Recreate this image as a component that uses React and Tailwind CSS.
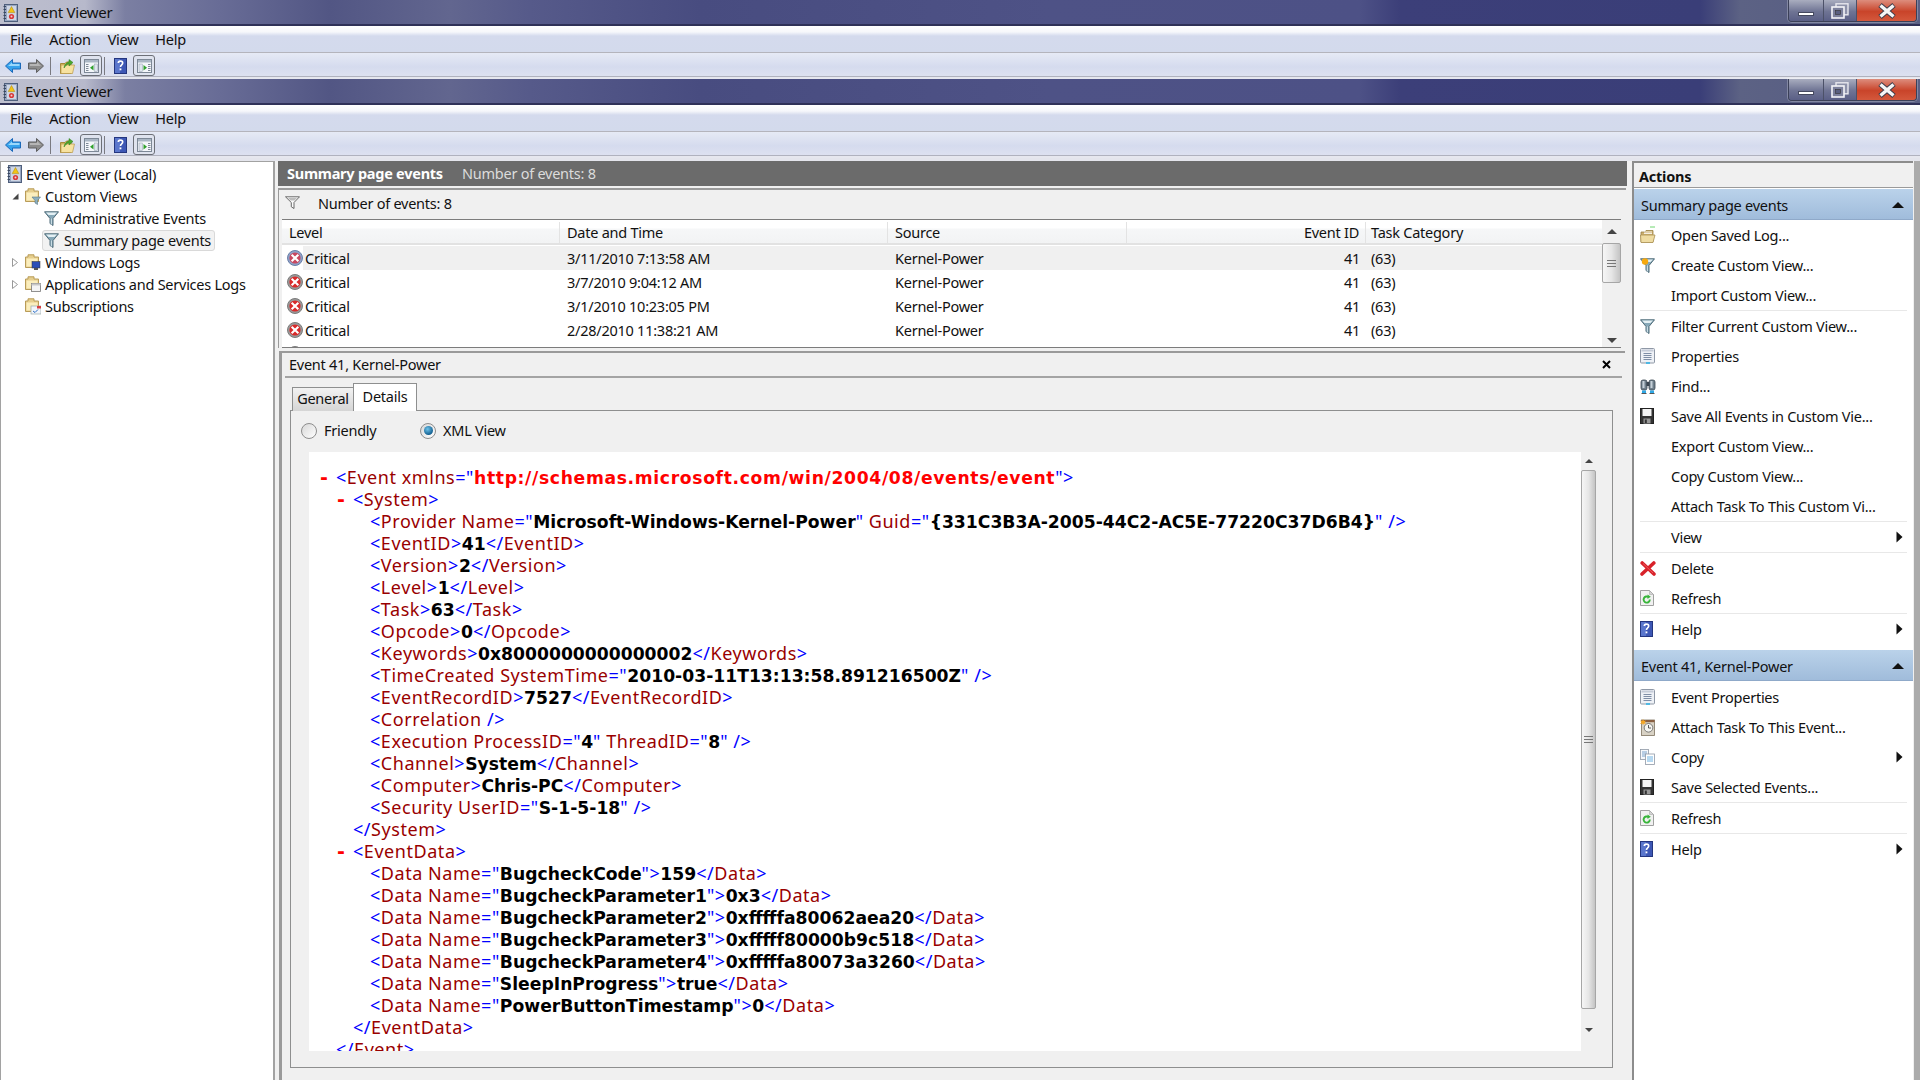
import React from "react";

const UI = "font-['Noto_Sans',sans-serif] text-[14.5px] tracking-[-0.25px] leading-none text-[#111]";

function Svg({ w = 16, h = 16, vb, className = "", children }) {
  return (
    <svg width={w} height={h} viewBox={vb || `0 0 ${w} ${h}`} className={"shrink-0 " + className}>
      {children}
    </svg>
  );
}

const EvIcon = () => (
  <Svg w={15} h={18}>
    <rect x="1.5" y="0.5" width="13" height="17" fill="#98a6c0" stroke="#4f5f7c" />
    <path d="M0.5 2.5 H3 M0.5 5.5 H3 M0.5 8.5 H3 M0.5 11.5 H3 M0.5 14.5 H3" stroke="#39475f" strokeWidth="1" />
    <rect x="4" y="2" width="9" height="14" fill="#cfd6e4" />
    <path d="M8.5 2.5 L11.8 8.6 H5.2 Z" fill="#f2c416" stroke="#a98408" strokeWidth="0.5" />
    <circle cx="8.5" cy="12.5" r="2.6" fill="#d8383a" />
    <circle cx="8.5" cy="12.5" r="1" fill="#f3d0d0" />
  </Svg>
);
const BackArrow = () => (
  <Svg w={16} h={14}>
    <path d="M0.5 7 L7.5 0.5 V4 H15.5 V10 H7.5 V13.5 Z" fill="#35a2ec" stroke="#1b68b8" strokeWidth="1" />
    <path d="M3 7 L7 3.5 V5 H14.5 V7 Z" fill="#9ad8fb" />
  </Svg>
);
const FwdArrow = () => (
  <Svg w={16} h={14}>
    <path d="M15.5 7 L8.5 0.5 V4 H0.5 V10 H8.5 V13.5 Z" fill="#8c8c8c" stroke="#5f5f5f" strokeWidth="1" />
    <path d="M2 5 H9 V3 L13 7 H2 Z" fill="#b5b5b5" />
  </Svg>
);
const FolderUp = () => (
  <Svg w={15} h={16}>
    <path d="M0.5 5.5 H5 L6.5 4 H11 V15.5 H0.5 Z" fill="#d9bc67" stroke="#a78a3a" />
    <path d="M1 7 H14.5 L12.5 15.5 H1 Z" fill="#f7e2a0" stroke="#b8984a" strokeWidth="0.7" />
    <path d="M4 10 C4.5 6 7 4.5 9 4 V1.5 L13 4.5 L9 8 V5.8 C7 6.2 5.5 8 4 10 Z" fill="#4aa82e" stroke="#2f7a1c" strokeWidth="0.5" />
  </Svg>
);
const PaneIcon = ({ right }) => (
  <Svg w={15} h={14}>
    <rect x="0.5" y="0.5" width="14" height="13" fill="#f4f6fa" stroke="#7d8896" />
    <rect x="1" y="1" width="13" height="2.5" fill="#aab6c4" />
    {right ? (
      <>
        <rect x="2" y="5" width="3.5" height="7.5" fill="#dfe5ee" stroke="#93a0b0" strokeWidth="0.5" />
        <path d="M6.5 6 L10 8.7 L6.5 11.5 Z" fill="#2fa02c" />
        <path d="M11 5.5 H13.5 M11 7.5 H13.5 M11 9.5 H13.5 M11 11.5 H13.5" stroke="#7d8896" strokeWidth="1" />
      </>
    ) : (
      <>
        <path d="M2 5.5 H4.5 M2 7.5 H4.5 M2 9.5 H4.5 M2 11.5 H4.5" stroke="#7d8896" strokeWidth="1" />
        <path d="M9.5 6 L6 8.7 L9.5 11.5 Z" fill="#2fa02c" />
        <rect x="10.5" y="5" width="3" height="7.5" fill="#dfe5ee" stroke="#93a0b0" strokeWidth="0.5" />
      </>
    )}
  </Svg>
);
const HelpIcon = () => (
  <Svg w={13} h={16}>
    <rect x="0.5" y="0.5" width="12" height="15" fill="#3d57b5" stroke="#24367f" />
    <rect x="1" y="1" width="5" height="14" fill="#5a76cc" />
    <path d="M4.3 5 C4.3 2.5 8.7 2.5 8.7 5 C8.7 6.8 6.5 7 6.5 9" fill="none" stroke="#fff" strokeWidth="1.6" />
    <rect x="5.6" y="10.4" width="1.8" height="1.9" fill="#fff" />
  </Svg>
);
const TreeFolder = ({ children }) => (
  <Svg w={16} h={17} className="mr-[4px]">
    <path d="M0.5 3 H3 V0.8 H9 V3 H13.5 V13.5 H0.5 Z" fill="#e6cf8e" stroke="#b99c58" />
    <rect x="1.5" y="4.5" width="11" height="8" fill="#fbeebd" />
    {children}
  </Svg>
);
const Funnel = ({ w = 15, h = 15, orange }) => (
  <Svg w={w} h={h} vb="0 0 15 15">
    <path d="M0.5 0.8 H14.5 L9 7.5 V14.5 L6 12.5 V7.5 Z" fill="#86a8b8" stroke="#4f6b78" strokeWidth="1" />
    <path d="M2 1.5 H13 L10.5 4 H4.5 Z" fill="#e4f0f4" />
    <rect x="6.8" y="7.5" width="1.2" height="6" fill="#c9dce4" />
    {orange && <circle cx="5" cy="3.5" r="3.2" fill="#f7a90e" />}
  </Svg>
);
const OutlineFunnel = () => (
  <Svg w={15} h={13} vb="0 0 15 13">
    <path d="M0.5 0.8 H14.5 L9 6.5 V12.5 L6.3 10.8 V6.5 Z" fill="#fafafa" stroke="#5a5a5a" strokeWidth="0.9" />
    <path d="M3 2 H12 L9.5 4.5 H5.5 Z" fill="#bdbdbd" />
  </Svg>
);
const Critical = ({ tint }) => (
  <Svg w={16} h={16}>
    <circle cx="8" cy="8" r="7.5" fill={tint ? "#8ea2c8" : "#9a9a9a"} stroke={tint ? "#6a7fa8" : "#7c7c7c"} strokeWidth="1" />
    <circle cx="8" cy="8" r="5.6" fill={tint ? "#c9475f" : "#d92a2a"} />
    <path d="M5.4 5.4 L10.6 10.6 M10.6 5.4 L5.4 10.6" stroke="#fff" strokeWidth="2.1" strokeLinecap="square" />
  </Svg>
);
const OpenLog = () => (
  <Svg w={16} h={18}>
    <path d="M10 1 H15" stroke="#6fd66f" strokeWidth="1" />
    <path d="M1 6 H5 L6 4.5 H13 V16 H1 Z" fill="#cdb070" stroke="#9a8144" strokeWidth="0.8" />
    <path d="M0.5 9 H15 L13 16.5 H1 Z" fill="#efdca2" stroke="#a98f50" strokeWidth="0.8" />
    <path d="M4 6 H12 M4 7.5 H12" stroke="#fff" strokeWidth="0.8" />
  </Svg>
);
const Props = () => (
  <Svg w={15} h={16}>
    <rect x="0.5" y="0.5" width="14" height="14.5" rx="1" fill="#eef1f6" stroke="#8f98a6" />
    <rect x="1.5" y="1.5" width="12" height="2" fill="#c5ccd8" />
    <path d="M3.5 5.5 H11.5 M3.5 7.5 H11.5 M3.5 9.5 H11.5 M3.5 11.5 H11.5" stroke="#7f8ea6" strokeWidth="1" />
    <rect x="6" y="14.2" width="4" height="1.6" fill="#34b4e8" />
  </Svg>
);
const Binoc = () => (
  <Svg w={16} h={16}>
    <rect x="1" y="2" width="6" height="10" rx="2" fill="#70808c" stroke="#3b4650" strokeWidth="0.8" />
    <rect x="9" y="2" width="6" height="10" rx="2" fill="#70808c" stroke="#3b4650" strokeWidth="0.8" />
    <rect x="2.5" y="3" width="2" height="7" fill="#c5d0d8" />
    <rect x="10.5" y="3" width="2" height="7" fill="#c5d0d8" />
    <rect x="6.5" y="4" width="3" height="4" fill="#3b4650" />
    <path d="M2 12.5 H6 V15 H2 Z M10 12.5 H14 V15 H10 Z" fill="#2ea8e6" />
    <path d="M1.5 15.5 H6.5 M9.5 15.5 H14.5" stroke="#555" />
  </Svg>
);
const Floppy = () => (
  <Svg w={14} h={16}>
    <rect x="0.5" y="0.5" width="13" height="15" fill="#333" stroke="#222" />
    <rect x="2.5" y="1" width="9" height="7" fill="#f4f4f4" />
    <rect x="3.5" y="10.5" width="7" height="5" fill="#9a9a9a" />
    <rect x="4.8" y="11.5" width="2" height="3.5" fill="#333" />
  </Svg>
);
const RedX = () => (
  <Svg w={16} h={15}>
    <path d="M2.2 2 L14 13 M13.8 2 L2 13" stroke="#d8222a" strokeWidth="3.6" strokeLinecap="round" />
    <path d="M3 2.5 L13 12" stroke="#f2696c" strokeWidth="0.8" />
  </Svg>
);
const Refresh = () => (
  <Svg w={14} h={16}>
    <path d="M0.5 0.5 H9.5 L13.5 4.5 V15.5 H0.5 Z" fill="#f1f1f1" stroke="#a0a0a0" />
    <path d="M9.5 0.5 V4.5 H13.5 Z" fill="#d5d5d5" stroke="#a0a0a0" strokeWidth="0.5" />
    <path d="M9.8 9.5 A3.1 3.1 0 1 1 8.6 7.1" fill="none" stroke="#38b53a" strokeWidth="1.9" />
    <path d="M7.5 4.6 L10.8 6.8 L7.5 9 Z" fill="#38b53a" />
  </Svg>
);
const TaskIcon = () => (
  <Svg w={15} h={17}>
    <rect x="1.5" y="1" width="13" height="15.5" fill="#d8d2c5" stroke="#7f735f" strokeWidth="0.8" />
    <rect x="1.5" y="1" width="13" height="2.2" fill="#8a5f42" />
    <circle cx="8.5" cy="8.8" r="4.3" fill="#f6f6f2" stroke="#5e5e5e" strokeWidth="0.8" />
    <path d="M8.5 6 V9 H11" fill="none" stroke="#333" strokeWidth="0.8" />
    <path d="M3 0 L4 2 L6 1.5 L4.8 3.2 L6 5 L4 4.4 L3 6 L2.2 4.4 L0 5 L1.3 3.2 L0 1.5 L2.2 2 Z" fill="#f5a623" />
  </Svg>
);
const CopyIcon = () => (
  <Svg w={15} h={16}>
    <rect x="0.5" y="0.5" width="8" height="10" fill="#f5f7fb" stroke="#8f98a6" strokeWidth="0.8" />
    <path d="M2 3 H7 M2 5 H7 M2 7 H7" stroke="#5a8fc4" strokeWidth="0.8" />
    <rect x="5.5" y="5" width="9" height="10.5" fill="#fff" stroke="#8f98a6" strokeWidth="0.8" />
    <path d="M7 8 H13 M7 10 H13 M7 12 H13" stroke="#4aa0dc" strokeWidth="0.8" />
  </Svg>
);

const Triangle = ({ className }) => (
  <Svg w={7} h={12} className={className}>
    <path d="M0.5 0.5 L6.5 6 L0.5 11.5 Z" fill="#111" />
  </Svg>
);
const UpTri = ({ className }) => (
  <Svg w={12} h={6} className={className}>
    <path d="M0 6 L6 0 L12 6 Z" fill="#111" />
  </Svg>
);

function WindowChrome() {
  return (
    <div className="flex flex-col shrink-0">
      <div className="h-[24px] flex justify-between bg-[linear-gradient(90deg,#bdbfce_0px,#b7b9cb_85px,#7b7fa2_125px,#686c96_220px,#525684_330px,#62668f_450px,#565a8a_530px,#484c80_700px,#4e5286_1050px,#4d5186_1360px,#3c3f79_1400px,#3a3e78_1700px,#5c6284_1740px,#5a6084_1790px)]">
        <div className="flex items-center pl-[3px] gap-[7px] pt-[1px]">
          <EvIcon />
          <span className={UI + " !text-[15px] text-[#111]"}>Event Viewer</span>
        </div>
        <div className="flex h-[22px] mr-[3px] rounded-b-[4px] border border-t-0 border-[#3b4058] overflow-hidden shadow-[0_0_0_1px_rgba(255,255,255,0.25)]">
          <div className="w-[35px] flex items-end justify-center pb-[5px] border-r border-[#4c5168] bg-[linear-gradient(180deg,#a9adbf,#6f7494_55%,#5a5f86)]">
            <div className="w-[16px] h-[4px] bg-white border border-[#45495f]" />
          </div>
          <div className="w-[33px] flex items-center justify-center border-r border-[#4c5168] bg-[linear-gradient(180deg,#a9adbf,#6f7494_55%,#5a5f86)]">
            <Svg w={18} h={16}>
              <rect x="5" y="0.8" width="12" height="11" fill="#8e92aa" stroke="#e8e8ee" strokeWidth="1.4" />
              <rect x="1" y="4" width="12" height="11" fill="#7c809c" stroke="#f4f4f8" strokeWidth="1.6" />
              <rect x="4.5" y="7.5" width="5" height="4" fill="#5a5f80" stroke="#333" strokeWidth="0.6" />
            </Svg>
          </div>
          <div className="w-[59px] flex items-center justify-center bg-[linear-gradient(180deg,#dd8d7d,#c9442a_55%,#d4583c)]">
            <Svg w={20} h={16}>
              <path d="M3 2 L17 14 M17 2 L3 14" stroke="#3b3b4a" strokeWidth="5.2" />
              <path d="M3.5 2.5 L16.5 13.5 M16.5 2.5 L3.5 13.5" stroke="#f5f5f5" strokeWidth="3.4" />
            </Svg>
          </div>
        </div>
      </div>
      <div className="h-[2px] bg-[#2f3158]" />
      <div className="h-[26px] flex items-center pl-[10px] gap-[17px] bg-[linear-gradient(180deg,#ffffff_0px,#f6f7fb_6px,#d4daed_10px,#d3daec_100%)]">
        {["File", "Action", "View", "Help"].map((m) => (
          <span key={m} className={UI}>{m}</span>
        ))}
      </div>
      <div className="h-px bg-[#b4b4bc]" />
      <div className="h-[23px] pt-[2px] flex items-center bg-[linear-gradient(180deg,#e6eaf5,#d5dbee_60%,#dde1f0)]">
        <div className="ml-[5px]"><BackArrow /></div>
        <div className="ml-[7px]"><FwdArrow /></div>
        <div className="ml-[6px] h-[18px] w-px bg-[#7a7a80]" />
        <div className="ml-[9px]"><FolderUp /></div>
        <div className="ml-[5px] w-[22px] h-[21px] flex items-center justify-center border border-[#6d7078] rounded-[3px] bg-[#dfe3ee]"><PaneIcon /></div>
        <div className="ml-[2px] h-[18px] w-px bg-[#7a7a80]" />
        <div className="ml-[9px]"><HelpIcon /></div>
        <div className="ml-[6px] w-[22px] h-[21px] flex items-center justify-center border border-[#6d7078] rounded-[3px] bg-[#dfe3ee]"><PaneIcon right /></div>
      </div>
      <div className="h-px bg-[#b0b2be]" />
      <div className="h-[2px] bg-[#e6e7ee]" />
    </div>
  );
}

function TreeRow({ pad, arrow, icon, label, selected }) {
  return (
    <div className="h-[22px] flex items-center relative" style={{ paddingLeft: pad }}>
      {arrow === "open" && (
        <Svg w={7} h={7} className="mr-[6px] -ml-[13px]"><path d="M6.5 0.5 V6.5 H0.5 Z" fill="#444" /></Svg>
      )}
      {arrow === "closed" && (
        <Svg w={6} h={9} className="mr-[7px] -ml-[13px]"><path d="M0.5 0.5 L5.5 4.5 L0.5 8.5 Z" fill="#fff" stroke="#999" /></Svg>
      )}
      {selected ? (
        <div className="h-[21px] -ml-[2px] pl-[1px] pr-[3px] flex items-center rounded-[3px] border border-[#d9d9d9] bg-[#f2f2f2]">
          {icon}
          <span className={UI + " ml-[5px]"}>{label}</span>
        </div>
      ) : (
        <>
          {icon}
          <span className={UI + (arrow || pad < 30 ? "" : " ml-[5px]")}>{label}</span>
        </>
      )}
    </div>
  );
}

function Tree() {
  return (
    <div className="w-[275px] shrink-0 h-full bg-white border-t border-l border-r-2 border-[#a2a2a2] pt-[1px]">
      <TreeRow pad={6} icon={<span className="mr-[4px] flex"><EvIcon /></span>} label="Event Viewer (Local)" />
      <TreeRow pad={24} arrow="open" icon={
        <TreeFolder><path d="M7 9 H15.5 L12.5 12.5 V16.5 L10 15 V12.5 Z" fill="#8eb0bf" stroke="#5b7986" strokeWidth="0.6" /></TreeFolder>
      } label="Custom Views" />
      <TreeRow pad={43} icon={<Funnel />} label="Administrative Events" />
      <TreeRow pad={43} icon={<Funnel />} label="Summary page events" selected />
      <TreeRow pad={24} arrow="closed" icon={
        <TreeFolder><rect x="7" y="7.5" width="8" height="6.5" fill="#2b4fb8" stroke="#333" strokeWidth="0.5" /><rect x="9" y="14" width="4" height="2" fill="#555" /></TreeFolder>
      } label="Windows Logs" />
      <TreeRow pad={24} arrow="closed" icon={
        <TreeFolder><rect x="6.5" y="7.5" width="9" height="8" fill="#f4f4f4" stroke="#777" strokeWidth="0.8" /><rect x="6.5" y="7.5" width="9" height="2" fill="#c7c7c7" /></TreeFolder>
      } label="Applications and Services Logs" />
      <TreeRow pad={24} icon={
        <TreeFolder><rect x="6" y="8" width="10" height="8" fill="#f2f5fa" stroke="#9aa" strokeWidth="0.7" /><rect x="12" y="8" width="4" height="2.5" fill="#d84040" /><path d="M8 13 L10 14.5 L13 11.5" fill="none" stroke="#2b70c9" strokeWidth="1" /></TreeFolder>
      } label="Subscriptions" />
    </div>
  );
}

const events = [
  ["3/11/2010 7:13:58 AM"],
  ["3/7/2010 9:04:12 AM"],
  ["3/1/2010 10:23:05 PM"],
  ["2/28/2010 11:38:21 AM"],
];

function ColHead({ className, children }) {
  return <div className={"h-full flex items-center border-r border-[#e3e3e3] " + className}><span className={UI}>{children}</span></div>;
}

function Scroll({ arrow = 5, thumbClass, width = "w-[19px]", topGap, tail }) {
  return (
    <div className={"shrink-0 flex flex-col items-center bg-[#f0f0f0] " + width}>
      <div className={"w-full flex items-center justify-center shrink-0 " + topGap}>
        <Svg w={arrow * 2} h={arrow}><path d={`M0 ${arrow} L${arrow} 0 L${arrow * 2} ${arrow} Z`} fill="#444" /></Svg>
      </div>
      <div className={"w-full flex items-center justify-center flex-col gap-[2px] border border-[#a6a6a6] rounded-[2px] bg-[linear-gradient(90deg,#f6f6f6,#e6e6e6_50%,#c4c4c4)] shrink-0 " + thumbClass}>
        <div className="w-[9px] h-px bg-[#777]" />
        <div className="w-[9px] h-px bg-[#777]" />
        <div className="w-[9px] h-px bg-[#777]" />
      </div>
      <div className="flex-1" />
      <div className={"w-full flex items-center justify-center shrink-0 " + tail}>
        <Svg w={arrow * 2} h={arrow}><path d={`M0 0 L${arrow} ${arrow} L${arrow * 2} 0 Z`} fill="#444" /></Svg>
      </div>
    </div>
  );
}

function EventList() {
  return (
    <div className="h-[129px] flex border-t border-b border-[#7c7c7c] bg-white overflow-hidden ml-[3px] mr-[5px]">
      <div className="flex-1 flex flex-col overflow-hidden">
        <div className="h-[25px] pt-[2px] shrink-0 flex border-b-2 border-[#e2e2e2] bg-[linear-gradient(180deg,#ffffff_0,#ffffff_8px,#f6f7f8_9px,#f2f3f4_100%)]">
          <ColHead className="w-[278px] pl-[7px]">Level</ColHead>
          <ColHead className="w-[328px] pl-[7px]">Date and Time</ColHead>
          <ColHead className="w-[239px] pl-[7px]">Source</ColHead>
          <div className="h-full w-[239px] flex items-center justify-end pr-[6px] border-r border-[#e3e3e3]"><span className={UI}>Event ID</span></div>
          <div className="flex-1 flex items-center pl-[5px]"><span className={UI}>Task Category</span></div>
        </div>
        <div className="h-px shrink-0" />
        {events.map(([d], i) => (
          <div key={d} className="h-[24px] shrink-0 flex items-center">
            <div className="w-[278px] h-full flex items-center pl-[5px]">
              <Critical tint={i === 0} />
              <div className={"flex-1 h-full flex items-center pl-[2px] " + (i === 0 ? "bg-[#f0f0f0]" : "")}><span className={UI}>Critical</span></div>
            </div>
            <div className={"flex-1 h-full flex items-center " + (i === 0 ? "bg-[#f0f0f0]" : "")}>
              <div className="w-[328px] pl-[7px]"><span className={UI}>{d}</span></div>
              <div className="w-[239px] pl-[7px]"><span className={UI}>Kernel-Power</span></div>
              <div className="w-[239px] pr-[6px] text-right"><span className={UI}>41</span></div>
              <div className="pl-[5px]"><span className={UI}>(63)</span></div>
            </div>
          </div>
        ))}
        <div className="h-[24px] shrink-0 flex items-start pl-[5px] pt-[4px]"><Critical /></div>
      </div>
      <Scroll thumbClass="h-[40px]" topGap="h-[23px]" tail="h-[14px]" />
    </div>
  );
}

const xml = [
  [0, 1, 'b<|nEvent xmlns|b="|rhttp://schemas.microsoft.com/win/2004/08/events/event|b">'],
  [1, 1, "b<|nSystem|b>"],
  [2, 0, 'b<|nProvider Name|b="|kMicrosoft-Windows-Kernel-Power|b"| n Guid|b="|k{331C3B3A-2005-44C2-AC5E-77220C37D6B4}|b" />'],
  [2, 0, "b<|nEventID|b>|k41|b</|nEventID|b>"],
  [2, 0, "b<|nVersion|b>|k2|b</|nVersion|b>"],
  [2, 0, "b<|nLevel|b>|k1|b</|nLevel|b>"],
  [2, 0, "b<|nTask|b>|k63|b</|nTask|b>"],
  [2, 0, "b<|nOpcode|b>|k0|b</|nOpcode|b>"],
  [2, 0, "b<|nKeywords|b>|k0x8000000000000002|b</|nKeywords|b>"],
  [2, 0, 'b<|nTimeCreated SystemTime|b="|k2010-03-11T13:13:58.891216500Z|b" />'],
  [2, 0, "b<|nEventRecordID|b>|k7527|b</|nEventRecordID|b>"],
  [2, 0, "b<|nCorrelation |b/>"],
  [2, 0, 'b<|nExecution ProcessID|b="|k4|b"| n ThreadID|b="|k8|b" />'],
  [2, 0, "b<|nChannel|b>|kSystem|b</|nChannel|b>"],
  [2, 0, "b<|nComputer|b>|kChris-PC|b</|nComputer|b>"],
  [2, 0, 'b<|nSecurity UserID|b="|kS-1-5-18|b" />'],
  [1, 0, "b</|nSystem|b>"],
  [1, 1, "b<|nEventData|b>"],
  [2, 0, 'b<|nData Name|b="|kBugcheckCode|b">|k159|b</|nData|b>'],
  [2, 0, 'b<|nData Name|b="|kBugcheckParameter1|b">|k0x3|b</|nData|b>'],
  [2, 0, 'b<|nData Name|b="|kBugcheckParameter2|b">|k0xfffffa80062aea20|b</|nData|b>'],
  [2, 0, 'b<|nData Name|b="|kBugcheckParameter3|b">|k0xfffff80000b9c518|b</|nData|b>'],
  [2, 0, 'b<|nData Name|b="|kBugcheckParameter4|b">|k0xfffffa80073a3260|b</|nData|b>'],
  [2, 0, 'b<|nData Name|b="|kSleepInProgress|b">|ktrue|b</|nData|b>'],
  [2, 0, 'b<|nData Name|b="|kPowerButtonTimestamp|b">|k0|b</|nData|b>'],
  [1, 0, "b</|nEventData|b>"],
  [0, 0, "b</|nEvent|b>"],
];

const TOK = {
  b: "text-[#0000ff] font-['Noto_Sans',sans-serif] text-[18px] tracking-[0.55px]",
  n: "text-[#990000] font-['Noto_Sans',sans-serif] text-[18px] tracking-[0.55px]",
  k: "text-black font-['DejaVu_Sans',sans-serif] font-bold text-[17.2px]",
  r: "text-[#ff0000] font-['DejaVu_Sans',sans-serif] font-bold text-[17.2px] tracking-[0.65px]",
};

function XmlLine({ indent, dash, src }) {
  const parts = src.split("|").map((s, i) => {
    if (s.startsWith(" n")) {
      return <span key={i} className={TOK.n + " whitespace-pre"}>{" " + s.slice(2).trim()}</span>;
    }
    return <span key={i} className={TOK[s[0]] + " whitespace-pre"}>{s.slice(1)}</span>;
  });
  return (
    <div className="h-[22px] flex items-center" style={{ paddingLeft: indent * 17 }}>
      <div className="w-[16px] shrink-0 text-[#ff0000] font-['DejaVu_Sans',sans-serif] font-bold text-[19px] leading-none">{dash ? "-" : ""}</div>
      <div className="leading-[22px] whitespace-pre">{parts}</div>
    </div>
  );
}

function Radio({ on }) {
  return (
    <div className="w-[16px] h-[16px] rounded-full border border-[#8d8d8d] bg-[linear-gradient(135deg,#d8d8d8,#ffffff)] flex items-center justify-center">
      {on && <div className="w-[9px] h-[9px] rounded-full bg-[radial-gradient(circle_at_40%_35%,#6ec3ea,#0d5a8c_75%)]" />}
    </div>
  );
}

function Details() {
  return (
    <div className="flex-1 min-h-0 flex flex-col ml-[1px] mr-[2px] border-t-2 border-l-[3px] border-[#9a9a9a] bg-[#f0f0f0]">
      <div className="h-[23px] shrink-0 flex items-center justify-between pl-[7px] pr-[14px]">
        <span className={UI}>Event 41, Kernel-Power</span>
        <Svg w={9} h={9}><path d="M1 1 L8 8 M8 1 L1 8" stroke="#000" strokeWidth="2" /></Svg>
      </div>
      <div className="h-[2px] shrink-0 mx-[3px] bg-[#a4a4a4]" />
      <div className="pl-[8px] pr-[12px] pt-[5px] flex-1 min-h-0 flex flex-col">
        <div className="flex items-end h-[28px] shrink-0 pl-[2px] -mb-px relative">
          <div className="w-[62px] h-[24px] pb-[2px] flex items-center justify-center border border-b-0 border-[#8e8f8f] bg-[linear-gradient(180deg,#f2f2f2,#d5d5d5)]"><span className={UI}>General</span></div>
          <div className="w-[64px] h-[28px] pb-[2px] flex items-center justify-center border border-b-0 border-[#8e8f8f] bg-white -ml-px"><span className={UI}>Details</span></div>
        </div>
        <div className="h-[658px] shrink-0 border border-[#8e8f8f] bg-[#f0f0f0] flex flex-col">
          <div className="h-[41px] pb-[2px] shrink-0 flex items-center pl-[10px]">
            <Radio />
            <span className={UI + " ml-[7px] w-[96px]"}>Friendly</span>
            <Radio on />
            <span className={UI + " ml-[7px]"}>XML View</span>
          </div>
          <div className="h-[599px] shrink-0 flex ml-[18px] mr-[16px]">
            <div className="flex-1 bg-white overflow-hidden pt-[14px] pl-[11px]">
              {xml.map(([i, d, s], n) => (
                <XmlLine key={n} indent={i} dash={d} src={s} />
              ))}
            </div>
            <Scroll arrow={4} width="w-[15px]" topGap="h-[18px]" tail="h-[42px]" thumbClass="h-[539px]" />
          </div>
        </div>
      </div>
    </div>
  );
}

function ActionItem({ icon, label, arrow }) {
  return (
    <div className="h-[30px] flex items-center pl-[6px] pr-[10px]">
      <div className="w-[31px] flex">{icon}</div>
      <span className={UI + " flex-1 whitespace-nowrap"}>{label}</span>
      {arrow && <Triangle />}
    </div>
  );
}
const Sep = () => <div className="h-px mx-[6px] bg-[#e8e8e8]" />;

function SectionHead({ children }) {
  return (
    <div className="h-[31px] pt-[2px] flex items-center justify-between pl-[7px] pr-[9px] bg-[linear-gradient(180deg,#bad2ea,#a0bcdb)] border-b border-[#8fa9c9]">
      <span className={UI}>{children}</span>
      <UpTri />
    </div>
  );
}

function Actions() {
  return (
    <div className="w-[281px] shrink-0 h-full bg-white border-l-2 border-t-2 border-[#8c8c8c] flex flex-col">
      <div className="h-[22px] pt-[2px] shrink-0 flex items-center pl-[5px] bg-[#f0f0f0] border-b border-[#9a9a9a] box-content">
        <span className={UI + " font-bold"}>Actions</span>
      </div>
      <div className="h-px bg-white shrink-0" />
      <SectionHead>Summary page events</SectionHead>
      <ActionItem icon={<OpenLog />} label="Open Saved Log..." />
      <ActionItem icon={<Funnel orange />} label="Create Custom View..." />
      <ActionItem label="Import Custom View..." />
      <Sep />
      <ActionItem icon={<Funnel />} label="Filter Current Custom View..." />
      <ActionItem icon={<Props />} label="Properties" />
      <ActionItem icon={<Binoc />} label="Find..." />
      <ActionItem icon={<Floppy />} label="Save All Events in Custom Vie..." />
      <ActionItem label="Export Custom View..." />
      <ActionItem label="Copy Custom View..." />
      <ActionItem label="Attach Task To This Custom Vi..." />
      <Sep />
      <ActionItem label="View" arrow />
      <Sep />
      <ActionItem icon={<RedX />} label="Delete" />
      <ActionItem icon={<Refresh />} label="Refresh" />
      <Sep />
      <ActionItem icon={<HelpIcon />} label="Help" arrow />
      <div className="h-[6px] shrink-0" />
      <SectionHead>Event 41, Kernel-Power</SectionHead>
      <div className="h-px bg-white shrink-0" />
      <ActionItem icon={<Props />} label="Event Properties" />
      <ActionItem icon={<TaskIcon />} label="Attach Task To This Event..." />
      <ActionItem icon={<CopyIcon />} label="Copy" arrow />
      <ActionItem icon={<Floppy />} label="Save Selected Events..." />
      <Sep />
      <ActionItem icon={<Refresh />} label="Refresh" />
      <Sep />
      <ActionItem icon={<HelpIcon />} label="Help" arrow />
    </div>
  );
}

export default function App() {
  return (
    <div className="w-[1920px] h-[1080px] overflow-hidden flex flex-col bg-[#f0f0f0]">
      <WindowChrome />
      <WindowChrome />
      <div className="h-[3px] shrink-0 bg-[#e4e5ec]" />
      <div className="flex-1 min-h-0 flex">
        <Tree />
        <div className="w-[1349px] ml-[3px] shrink-0 h-full flex flex-col">
          <div className="h-[25px] shrink-0 flex items-center pl-[9px] bg-[#6b6b6b]">
            <span className={UI + " !text-white font-bold w-[175px]"}>Summary page events</span>
            <span className={UI + " !text-[#dcdcdc]"}>Number of events: 8</span>
          </div>
          <div className="h-[2px] shrink-0" />
          <div className="shrink-0 mr-[1px] border-t-2 border-l border-[#9a9a9a] bg-[#f0f0f0]">
            <div className="h-[29px] pb-[2px] flex items-center pl-[6px]">
              <div className="-mt-[3px]"><OutlineFunnel /></div>
              <span className={UI + " ml-[18px]"}>Number of events: 8</span>
            </div>
            <EventList />
          </div>
          <div className="h-[3px] shrink-0" />
          <Details />
        </div>
        <div className="w-[5px] shrink-0" />
        <Actions />
        <div className="w-[1px] shrink-0" />
        <div className="w-[6px] shrink-0 bg-[#ababab]" />
      </div>
    </div>
  );
}
